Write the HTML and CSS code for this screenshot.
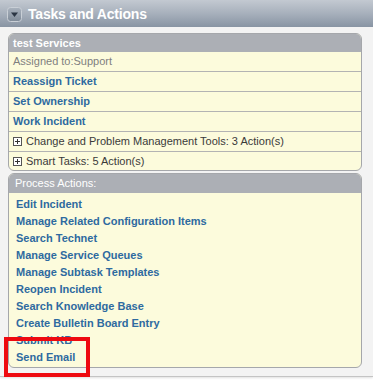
FILE: index.html
```html
<!DOCTYPE html>
<html>
<head>
<meta charset="utf-8">
<link rel="stylesheet" href="styles.css">
</head>
<body>
<div class="widget">
  <div class="wtitle">
    <span class="toggle">
      <svg width="15" height="15" viewBox="0 0 15 15">
        <defs>
          <linearGradient id="tg" x1="0" y1="0" x2="0" y2="1">
            <stop offset="0" stop-color="#a9b2bd"/>
            <stop offset="1" stop-color="#7f8b99"/>
          </linearGradient>
        </defs>
        <rect x="0.5" y="0.5" width="14" height="14" rx="3" fill="url(#tg)" stroke="#c9cfd6"/>
        <path d="M4 5.5 H11 L7.5 10 Z" fill="#2b3644"/>
      </svg>
    </span>
    <span class="wtitle-text">Tasks and Actions</span>
  </div>
  <div class="wbody">
    <div class="panel">
      <div class="phead bold">test Services</div>
      <div class="row muted">Assigned to:Support</div>
      <div class="row"><a class="lnk">Reassign Ticket</a></div>
      <div class="row"><a class="lnk">Set Ownership</a></div>
      <div class="row"><a class="lnk">Work Incident</a></div>
      <div class="row group">
        <svg class="plus" width="9" height="9" viewBox="0 0 9 9"><rect x="0.5" y="0.5" width="8" height="8" fill="#fff" stroke="#555"/><path d="M2 4.5H7M4.5 2V7" stroke="#333"/></svg>
        <span>Change and Problem Management Tools: 3 Action(s)</span>
      </div>
      <div class="row group last">
        <svg class="plus" width="9" height="9" viewBox="0 0 9 9"><rect x="0.5" y="0.5" width="8" height="8" fill="#fff" stroke="#555"/><path d="M2 4.5H7M4.5 2V7" stroke="#333"/></svg>
        <span>Smart Tasks: 5 Action(s)</span>
      </div>
    </div>
    <div class="panel panel2">
      <div class="phead">Process Actions:</div>
      <ul class="links">
        <li><a class="lnk">Edit Incident</a></li>
        <li><a class="lnk">Manage Related Configuration Items</a></li>
        <li><a class="lnk">Search Technet</a></li>
        <li><a class="lnk">Manage Service Queues</a></li>
        <li><a class="lnk">Manage Subtask Templates</a></li>
        <li><a class="lnk">Reopen Incident</a></li>
        <li><a class="lnk">Search Knowledge Base</a></li>
        <li><a class="lnk">Create Bulletin Board Entry</a></li>
        <li><a class="lnk">Submit KB</a></li>
        <li><a class="lnk">Send Email</a></li>
      </ul>
    </div>
  </div>
</div>
<div class="highlight"></div>
</body>
</html>
```

FILE: styles.css
```css
html, body {
  margin: 0;
  padding: 0;
  background: #ffffff;
  font-family: "Liberation Sans", Arial, sans-serif;
  font-size: 11px;
}
body {
  position: relative;
  width: 373px;
  height: 382px;
  overflow: hidden;
}
.widget {
  background: #f3f3f3;
  border-bottom: 1px solid #c4c4c4;
  box-shadow: 0 1px 2px rgba(0,0,0,0.12);
}
.wtitle {
  height: 27px;
  display: flex;
  align-items: center;
  background: linear-gradient(to bottom, #c3c9d1 0%, #a7b0bc 50%, #8894a3 100%);
  padding-left: 7px;
}
.toggle {
  display: flex;
  width: 15px;
  height: 15px;
  margin-right: 6px;
  margin-top: 1px;
}
.wtitle-text {
  color: #ffffff;
  font-weight: bold;
  font-size: 14px;
  letter-spacing: -0.2px;
}
.wbody {
  padding: 6px 11px 8px 8px;
}
.panel {
  background: #fcfbdc;
  border: 1px solid #a5a7ab;
  border-radius: 6px;
  overflow: hidden;
}
.panel2 {
  margin-top: 2px;
}
.phead {
  height: 18px;
  line-height: 18px;
  background: #acafb5;
  color: #ffffff;
  padding-left: 4px;
}
.phead.bold {
  font-weight: bold;
}
.panel2 .phead {
  height: 19px;
  line-height: 19px;
  padding-left: 6px;
}
.row {
  height: 19px;
  line-height: 19px;
  border-bottom: 1px solid #b3b3b3;
  padding-left: 4px;
  display: flex;
  align-items: center;
}
.row.last {
  border-bottom: none;
  height: 18px;
}
.muted {
  color: #7f7f7f;
}
.lnk {
  color: #2e6aa0;
  font-weight: bold;
  text-decoration: none;
}
.group {
  color: #3a3a3a;
  padding-left: 4px;
}
.plus {
  margin-right: 4px;
  flex: none;
}
.links {
  list-style: none;
  margin: 0;
  padding: 3px 0 1px 7px;
}
.links li {
  height: 17px;
  line-height: 17px;
}
.highlight {
  position: absolute;
  left: 4px;
  top: 337px;
  width: 78px;
  height: 32px;
  border: 4px solid #ee0a10;
}
```
